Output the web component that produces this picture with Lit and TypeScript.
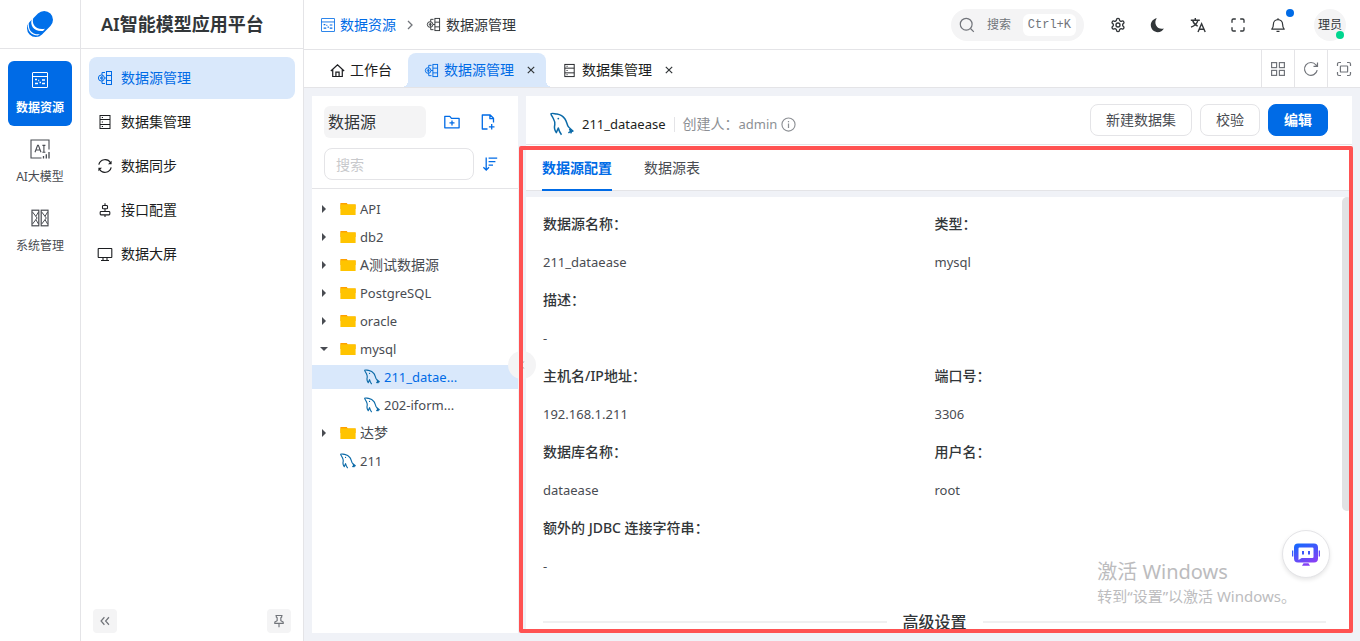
import { LitElement, html, css, svg, nothing, type TemplateResult } from "lit";
import { customElement, property, state } from "lit/decorators.js";
import { classMap } from "lit/directives/class-map.js";

/* ---------- icons ---------- */

const stroke = (size: number, box: number, width: number, body: TemplateResult) => html`<svg class="icon"
  width=${size} height=${size} viewBox="0 0 ${box} ${box}" fill="none" stroke="currentColor"
  stroke-width=${width} aria-hidden="true">${body}</svg>`;

const icons: Record<string, (size: number) => TemplateResult> = {
  resource: (s) => stroke(s, 16, 1, svg`<rect x=".5" y=".5" width="15" height="15" rx=".5"/><path d="M.5 4.5h15"/><path d="M3 7.5h2M6.2 8.5h1M3 11.5h3M7.5 10.5h1.5M10 8h3M10 11.5h3" stroke-width="1.3"/>`),
  source: (s) => stroke(s, 16, 1, svg`<rect x="9.500" y="1.500" width="5" height="13"/><path d="M9.500 5.500h5M9.500 10.500h5M8 2.500H5v2.500M8 13.500H5V11M5 6v4.500M7.500 8h2"/><circle cx="4.400" cy="8" r="3"/><circle cx="4.400" cy="8" r=".9"/>`),
  dataset: (s) => stroke(s, 16, 1, svg`<rect x="3" y="1.500" width="10" height="13"/><path d="M3 5.500h10M3 10.500h10M4.800 3.500h1.200M4.800 8h1.200M4.800 12.500h1.200"/>`),
  sync: (s) => stroke(s, 16, 1.2, svg`<path d="M1.800 6.600A6.500 6.500 0 0 1 13.600 4.700M14.200 9.400A6.500 6.500 0 0 1 2.400 11.300"/><path d="M14.600 2.800v3.400h-3.600zM1.400 13.200V9.800H5z" fill="currentColor" stroke="none"/>`),
  api: (s) => stroke(s, 16, 1.1, svg`<rect x="5.500" y="3.500" width="5" height="3.200" rx=".8"/><rect x="3.200" y="9.500" width="9.600" height="3.400" rx=".8"/><path d="M8 1.300v2.200M8 6.700v2.800M8 12.900v2"/>`),
  screen: (s) => stroke(s, 16, 1.1, svg`<rect x="1.200" y="2.500" width="13.600" height="9" rx=".4"/><path d="M6 11.500v3M10 11.500v3M4 14.500h8"/>`),
  model: (s) => stroke(s, 20, 1.1, svg`<path d="M19 10.500V1H1v18h10.500"/><path d="M13.500 19.500V17M16.300 19.500v-4.300M19 19.500v-6.500" stroke-width="1.300"/><path d="M5 13.300l2.600-7h.8l2.600 7M6 11h4M12.400 6.400h3M12.400 13.200h3M13.900 6.400v6.800"/>`),
  system: (s) => stroke(s, 18, 1.2, svg`<rect x="1" y="1.200" width="6.800" height="15.600"/><rect x="10.200" y="1.200" width="6.800" height="15.600"/><path d="M1.500 3l4.600 6-4.600 6M7.500 3L4.900 7.200M7.500 15l-2.600-4.200M10.700 3l4.600 6-4.600 6M16.600 3l-2.500 4.200M16.600 15l-2.500-4.200" stroke-width="1"/>`),
  home: (s) => stroke(s, 16, 1.3, svg`<path d="M.9 8.600L8 1.900l7.100 6.700M2.900 7.200v7.200h10.200V7.200M6.300 14.200V9.800h3.400v4.400"/>`),
  close: (s) => stroke(s, 10, 1.2, svg`<path d="M1.800 1.800l6.400 6.400M8.200 1.800L1.800 8.200"/>`),
  chevron: (s) => stroke(s, 12, 1.3, svg`<path d="M4 2l4 4-4 4"/>`),
  search: (s) => stroke(s, 16, 1.2, svg`<circle cx="7.200" cy="7.200" r="5.900"/><path d="M11.500 11.500l3.300 3.300"/>`),
  gear: (s) => stroke(s, 24, 2, svg`<path stroke-linejoin="round" d="M12.200 2h-.4a2 2 0 0 0-2 2v.2a2 2 0 0 1-1 1.700l-.5.3a2 2 0 0 1-2 0l-.1-.1a2 2 0 0 0-2.700.7l-.2.4a2 2 0 0 0 .7 2.700l.1.1a2 2 0 0 1 1 1.700v.5a2 2 0 0 1-1 1.800l-.1.1a2 2 0 0 0-.7 2.700l.2.4a2 2 0 0 0 2.700.7l.2-.1a2 2 0 0 1 2 0l.4.3a2 2 0 0 1 1 1.700v.2a2 2 0 0 0 2 2h.4a2 2 0 0 0 2-2v-.2a2 2 0 0 1 1-1.700l.5-.3a2 2 0 0 1 2 0l.1.1a2 2 0 0 0 2.700-.7l.2-.4a2 2 0 0 0-.7-2.700l-.1-.1a2 2 0 0 1-1-1.800v-.5a2 2 0 0 1 1-1.700l.1-.1a2 2 0 0 0 .7-2.700l-.2-.4a2 2 0 0 0-2.700-.7l-.2.1a2 2 0 0 1-2 0l-.4-.3a2 2 0 0 1-1-1.700V4a2 2 0 0 0-2-2z"/><circle cx="12" cy="12" r="3"/>`),
  moon: (s) => stroke(s, 16, 0, svg`<path fill="currentColor" d="M6.800 1.200C2.900 1.900.6 5 .8 8.600c.2 3.700 3.200 6.600 6.900 6.600 2.700 0 5-1.400 6.200-3.700-3.200.9-6.300-.2-7.700-2.900-1.300-2.400-1.100-5.200.6-7.400z"/>`),
  translate: (s) => stroke(s, 16, 1.4, svg`<path d="M.8 3.200h9M5.300 1v2.200M7.900 3.400C7 6.800 4.600 8.900 1 10.200M2.700 3.500c.8 2.800 2.400 4.500 5 5.600M8 15l3.600-8.200L15.200 15M9.200 12.200h4.800"/>`),
  expand: (s) => stroke(s, 24, 2, svg`<path stroke-linecap="round" stroke-linejoin="round" d="M8 3H5a2 2 0 0 0-2 2v3M21 8V5a2 2 0 0 0-2-2h-3M3 16v3a2 2 0 0 0 2 2h3M16 21h3a2 2 0 0 0 2-2v-3"/>`),
  bell: (s) => stroke(s, 16, 1.2, svg`<path d="M1.800 12.200h12.400c-1-1.100-1.600-2.200-1.600-5a4.600 4.600 0 0 0-9.200 0c0 2.800-.6 3.900-1.600 5z" stroke-linejoin="round"/><path d="M6.500 14.300h3M8 1.200v1.400"/>`),
  grid: (s) => stroke(s, 16, 1.2, svg`<rect x="1.600" y="1.600" width="5" height="5"/><rect x="9.400" y="1.600" width="5" height="5"/><rect x="1.600" y="9.400" width="5" height="5"/><rect x="9.400" y="9.400" width="5" height="5"/>`),
  refresh: (s) => stroke(s, 16, 1.2, svg`<path d="M14.200 9.200A6.400 6.400 0 1 1 13 4l1.400 1.300M14.500 1.400v4h-4"/>`),
  focus: (s) => stroke(s, 16, 1.2, svg`<path d="M1.500 5V3a1.500 1.500 0 0 1 1.500-1.500h2M11 1.500h2A1.500 1.500 0 0 1 14.500 3v2M14.500 11v2a1.500 1.500 0 0 1-1.500 1.500h-2M5 14.500H3A1.500 1.500 0 0 1 1.500 13v-2"/><rect x="4.400" y="5" width="7.200" height="6" rx=".6"/>`),
  folderAdd: (s) => stroke(s, 16, 1.3, svg`<path d="M.8 13.800V2.300h5l1.700 2h7.600v9.500H.8z" stroke-linejoin="round"/><path d="M8 6.400v5M5.500 8.900h5"/>`),
  fileAdd: (s) => stroke(s, 16, 1.3, svg`<path d="M7.500 15H2.300V1h7.900l3.300 3.300V8.500M9.900 1v3.700h3.600" stroke-linejoin="round"/><path d="M11.700 10v5.600M8.900 12.800h5.600"/>`),
  sort: (s) => stroke(s, 16, 1.3, svg`<path d="M4.200 1.500v12.500M1.400 11.200l2.800 2.900L7 11.200M6.600 2.200h8.600M6.600 5.700h6.800M6.600 9.200h4.400"/>`),
  info: (s) => stroke(s, 16, 1.2, svg`<circle cx="8" cy="8" r="7"/><path d="M8 7v4.800M8 4.200v1.500" stroke-width="1.300"/>`),
  collapse: (s) => stroke(s, 14, 1.4, svg`<path d="M6.300 2.600L2.400 7l3.900 4.400M11.600 2.600L7.700 7l3.900 4.400"/>`),
  pin: (s) => stroke(s, 16, 1.3, svg`<path d="M4 1.700h8M4.900 1.700v1.700l1 1v3.200L3.200 9.300v1.400h9.600V9.300l-2.700-1.700V4.400l1-1V1.700M8 10.700v4.500"/>`),
  left: (s) => stroke(s, 12, 1.2, svg`<path d="M8 2L4 6l4 4"/>`),
  dolphin: (s) => html`<svg class="icon" width=${s} height=${s} viewBox="0 0 24 24" fill="none" stroke="#0b6aa8" stroke-width=${s > 20 ? 1.5 : 1.7} stroke-linejoin="round" aria-hidden="true"><path d="M11.500 22.800C10 20.800 9 18.800 8.300 16L6.300 20.600C4.300 18 4.100 15.500 4.800 12.500c.5-3-1-5-2-7C2 4 .9 2.800 1 1.800 1.800.8 4.200 1.700 7 2c4 .6 6.500 2.800 8 5 1.600 2.400 2 5.200 3 7.200 1 1.800 3.200 3 4.900 4.900-1.500.4-3.100.6-4.500 1.700M19.500 16.800l1.900 4.600"/><circle cx="8.300" cy="6.600" r=".9" fill="#0b6aa8" stroke="none"/></svg>`,
  folder: (s) => html`<svg class="icon" width=${s} height=${s} viewBox="0 0 16 16" aria-hidden="true"><path fill="#ffa000" d="M.4 2h6.400l1 1.400h7.800V8H.4z"/><path fill="#ffc400" d="M.4 3.400h15.200V14H.4z"/></svg>`,
  logo: (s) => html`<svg class="icon" width=${s} height=${s} viewBox="0 0 28 28" aria-hidden="true"><path d="M9.800 18.200l8.400-8.400" stroke="#0070ea" stroke-width="17.600" stroke-linecap="round"/><path fill="#fff" d="M7.400 7.200C5.300 13.500 9 20.500 19 18.800l-2 2.200C8 22 3.300 15.300 6 8.800z"/><path fill="#fff" d="M3 12.700C2 19.200 5.500 25 14 24.300l-2.300 1.200C5 25.500.8 20 2.200 14z"/></svg>`,
  bot: (s) => html`<svg class="icon" width=${s} height=${s} viewBox="0 0 28 28" aria-hidden="true"><defs><linearGradient id="botfill" x1="0" y1="0" x2=".5" y2="1"><stop offset="0" stop-color="#0a6cff"/><stop offset="1" stop-color="#8a3ff5"/></linearGradient></defs><path fill="url(#botfill)" fill-rule="evenodd" d="M6 3.500h16a4 4 0 0 1 4 4v11a4 4 0 0 1-4 4H6a4 4 0 0 1-4-4v-11a4 4 0 0 1 4-4zm1.500 4a1 1 0 0 0-1 1v11.500l3.200-2h10.800a1 1 0 0 0 1-1V8.500a1 1 0 0 0-1-1zM0 10.500h1.300v6H0zM26.700 10.500H28v6h-1.300zM11.500 23.200h5l1.500 2.500h-8z"/><path fill="#3b57fa" d="M10 11h2v3.500h-2zM16 11h2v3.500h-2z"/></svg>`,
};

const reset = css`
  * { box-sizing: border-box; }
  button, input { font: inherit; color: inherit; margin: 0; padding: 0; border: 0; background: none; outline: 0; }
  button { cursor: pointer; }
  a { color: inherit; text-decoration: none; }
  ul, dl, dd, h1, h2 { margin: 0; padding: 0; list-style: none; font-weight: 400; }
  .icon { display: block; flex: none; }
  .latin { font-size: 13px; }
`;

const isLatin = (text: string) => /^[\x20-\x7e]+$/.test(text);

/* ---------- left rails ---------- */

@customElement("module-rail")
class ModuleRail extends LitElement {
  static styles = [reset, css`
    :host { display: flex; flex-direction: column; width: 81px; flex: none; background: #fff; border-right: 1px solid #e4e4e7; }
    .logo { display: flex; align-items: center; justify-content: center; height: 49px; border-bottom: 1px solid #e4e4e7; }
    nav { display: flex; flex-direction: column; gap: 4px; padding: 12px 8px; }
    .item { display: flex; flex-direction: column; align-items: center; gap: 9px; height: 65px; padding-top: 9px; border-radius: 6px; font-size: 12px; line-height: 18px; color: #494c52; }
    .active { background: #006be6; color: #fff; font-weight: 700; }
    .glyph { display: flex; align-items: center; height: 20px; }
  `];
  render() {
    const items = [["resource", "数据资源", 16], ["model", "AI大模型", 20], ["system", "系统管理", 18]] as const;
    return html`<div class="logo">${icons.logo(28)}</div>
      <nav>${items.map(([icon, label, size], i) => html`<a href="#" class=${classMap({ item: true, active: i === 0 })}>
        <span class="glyph">${icons[icon](size)}</span><span>${label}</span></a>`)}</nav>`;
  }
}

@customElement("side-menu")
class SideMenu extends LitElement {
  static styles = [reset, css`
    :host { display: flex; flex-direction: column; width: 223px; flex: none; background: #fff; border-right: 1px solid #e4e4e7; }
    h1 { height: 49px; line-height: 48px; padding-left: 20px; border-bottom: 1px solid #e4e4e7; font-size: 18px; font-weight: 600; color: #323639; white-space: nowrap; }
    nav { display: flex; flex-direction: column; gap: 2px; padding: 8px; flex: 1; }
    .item { display: flex; align-items: center; gap: 8px; height: 42px; padding-left: 8px; border-radius: 8px; font-size: 14px; color: #1c1e21; }
    .active { background: #d9e8fb; color: #006be6; }
    .foot { display: flex; justify-content: space-between; padding: 8px 12px; }
    .foot button { display: flex; align-items: center; justify-content: center; width: 24px; height: 24px; border-radius: 4px; background: #f4f4f5; color: #71747a; }
  `];
  render() {
    const items = [["source", "数据源管理"], ["dataset", "数据集管理"], ["sync", "数据同步"], ["api", "接口配置"], ["screen", "数据大屏"]];
    return html`<h1>AI智能模型应用平台</h1>
      <nav>${items.map(([icon, label], i) => html`<a href="#" class=${classMap({ item: true, active: i === 0 })}>${icons[icon](16)}<span>${label}</span></a>`)}</nav>
      <div class="foot"><button aria-label="收起">${icons.collapse(12)}</button><button aria-label="固定">${icons.pin(14)}</button></div>`;
  }
}

/* ---------- header and page tabs ---------- */

@customElement("top-bar")
class TopBar extends LitElement {
  static styles = [reset, css`
    :host { display: flex; align-items: center; justify-content: space-between; height: 50px; padding: 0 14px 0 17px; flex: none; background: #fff; border-bottom: 1px solid #e4e4e7; color: #323639; font-size: 14px; }
    .crumbs { display: flex; align-items: center; gap: 8px; }
    .crumb { display: flex; align-items: center; gap: 5px; }
    .link { color: #006be6; }
    .next { color: #71747a; padding-right: 2px; }
    .tools { display: flex; align-items: center; }
    .search { display: flex; align-items: center; height: 32px; width: 133px; padding: 0 8px; margin-right: 18px; border-radius: 16px; background: #f4f4f5; color: #71747a; font-size: 12px; }
    .search span { padding-left: 12px; flex: 1; text-align: left; }
    kbd { font: 12px/22px "Liberation Mono", "DejaVu Sans Mono", monospace; background: #fff; border-radius: 6px; padding: 0 5px; }
    .tool { position: relative; display: flex; align-items: center; justify-content: center; width: 32px; height: 32px; margin-right: 8px; }
    .dot { position: absolute; right: 0; top: 0; width: 8px; height: 8px; border-radius: 50%; background: #006be6; }
    .avatar { position: relative; width: 32px; height: 32px; margin-left: 12px; border-radius: 50%; background: #f4f4f5; font-size: 12px; line-height: 32px; text-align: center; white-space: nowrap; }
    .online { position: absolute; right: 2px; bottom: 2px; width: 8px; height: 8px; border-radius: 50%; background: #00d68f; }
  `];
  render() {
    return html`<nav class="crumbs">
        <a href="#" class="crumb link">${icons.resource(14)}<span>数据资源</span></a>
        <span class="next">${icons.chevron(12)}</span>
        <span class="crumb">${icons.source(15)}<span>数据源管理</span></span>
      </nav>
      <div class="tools">
        <button class="search">${icons.search(16)}<span>搜索</span><kbd>Ctrl+K</kbd></button>
        <button class="tool" aria-label="设置">${icons.gear(16)}</button>
        <button class="tool" aria-label="主题">${icons.moon(16)}</button>
        <button class="tool" aria-label="语言">${icons.translate(16)}</button>
        <button class="tool" aria-label="全屏">${icons.expand(16)}</button>
        <button class="tool" aria-label="通知">${icons.bell(16)}<i class="dot"></i></button>
        <button class="avatar">理员<i class="online"></i></button>
      </div>`;
  }
}

@customElement("page-tabs")
class PageTabs extends LitElement {
  static styles = [reset, css`
    :host { display: flex; align-items: stretch; justify-content: space-between; height: 38px; flex: none; background: #fff; border-bottom: 1px solid #e4e4e7; color: #1c1e21; font-size: 14px; }
    .tabs { display: flex; padding-left: 12px; align-items: flex-end; }
    .tab { position: relative; display: flex; align-items: center; gap: 5px; height: 34px; padding: 0 6px 0 16px; border-radius: 8px 8px 0 0; white-space: nowrap; }
    .home { padding: 0 16px 0 14px; }
    .active { background: #d9e8fb; color: #006be6; }
    .active::before, .active::after { content: ""; position: absolute; bottom: 0; width: 6px; height: 6px; }
    .active::before { left: -6px; background: radial-gradient(circle at 0 0, transparent 6px, #d9e8fb 6px); }
    .active::after { right: -6px; background: radial-gradient(circle at 100% 0, transparent 6px, #d9e8fb 6px); }
    .close { display: flex; color: #323639; padding: 4px; margin-left: 3px; }
    .actions { display: flex; color: #71747a; }
    .actions button { display: flex; align-items: center; justify-content: center; width: 33px; border-left: 1px solid #e4e4e7; }
  `];
  render() {
    const close = html`<button class="close" aria-label="关闭">${icons.close(10)}</button>`;
    return html`<div class="tabs">
        <a href="#" class="tab home">${icons.home(15)}<span>工作台</span></a>
        <div class="tab active">${icons.source(15)}<span>数据源管理</span>${close}</div>
        <div class="tab">${icons.dataset(15)}<span>数据集管理</span>${close}</div>
      </div>
      <div class="actions"><button aria-label="布局">${icons.grid(16)}</button><button aria-label="刷新">${icons.refresh(16)}</button><button aria-label="最大化">${icons.focus(16)}</button></div>`;
  }
}

/* ---------- data source tree ---------- */

interface Node { label: string; kind: "folder" | "dolphin"; level: number; open?: boolean; selected?: boolean; }

@customElement("source-tree")
class SourceTree extends LitElement {
  static styles = [reset, css`
    :host { position: relative; z-index: 1; display: flex; flex-direction: column; width: 206px; flex: none; background: #fff; color: #494c52; font-size: 14px; }
    .head { display: grid; grid-template-columns: auto 1fr; gap: 10px 12px; padding: 10px 12px 8px; border-bottom: 1px solid #e4e4e7; color: #006be6; }
    .title { width: 102px; height: 32px; padding-left: 4px; line-height: 32px; border-radius: 6px; background: #f4f4f5; color: #323639; font-size: 16px; }
    .row { grid-column: 1 / -1; display: flex; align-items: center; }
    .adds { display: flex; align-items: center; gap: 20px; padding-left: 6px; }
    .adds button, .sort { display: flex; }
    input { width: 150px; height: 32px; padding: 0 11px; border: 1px solid #e4e4e7; border-radius: 8px; color: #323639; }
    input::placeholder { color: #c8c9cc; opacity: 1; }
    .sort { padding-left: 8px; }
    ul { display: flex; flex-direction: column; gap: 4px; padding-top: 8px; }
    li { display: flex; align-items: center; height: 24px; padding-left: 4px; }
    .nested { padding-left: 28px; }
    .selected { background: #d9e8fb; color: #006be6; }
    .caret { display: flex; width: 24px; padding-left: 4px; flex: none; }
    .label { padding-left: 4px; white-space: nowrap; }
    .handle { position: absolute; right: -18px; top: 255px; display: flex; align-items: center; justify-content: center; width: 28px; height: 28px; border-radius: 50%; background: #f4f4f5; color: #71747a; }
  `];
  @state() nodes: Node[] = [
    { label: "API", kind: "folder", level: 0 },
    { label: "db2", kind: "folder", level: 0 },
    { label: "A测试数据源", kind: "folder", level: 0 },
    { label: "PostgreSQL", kind: "folder", level: 0 },
    { label: "oracle", kind: "folder", level: 0 },
    { label: "mysql", kind: "folder", level: 0, open: true },
    { label: "211_datae...", kind: "dolphin", level: 1, selected: true },
    { label: "202-iform...", kind: "dolphin", level: 1 },
    { label: "达梦", kind: "folder", level: 0 },
    { label: "211", kind: "dolphin", level: 0 },
  ];
  private caret(n: Node) {
    if (n.kind !== "folder") return nothing;
    return html`<svg width="8" height="8" viewBox="0 0 8 8" aria-hidden="true"><path fill="#494c52" d=${n.open ? "M0 2h8L4 6z" : "M2 0v8l4-4z"}/></svg>`;
  }
  render() {
    return html`<div class="head">
        <div class="title">数据源</div>
        <div class="adds"><button aria-label="新建文件夹">${icons.folderAdd(16)}</button><button aria-label="新建数据源">${icons.fileAdd(16)}</button></div>
        <div class="row"><input type="text" placeholder="搜索" aria-label="搜索"><button class="sort" aria-label="排序">${icons.sort(16)}</button></div>
      </div>
      <ul>${this.nodes.map((n) => html`<li class=${classMap({ nested: n.level > 0, selected: !!n.selected })}>
        <span class="caret">${this.caret(n)}</span>${icons[n.kind](16)}<span class=${classMap({ label: true, latin: isLatin(n.label) })}>${n.label}</span></li>`)}</ul>
      <button class="handle" aria-label="收起面板">${icons.left(10)}</button>`;
  }
}

/* ---------- details ---------- */

@customElement("source-detail")
class SourceDetail extends LitElement {
  static styles = [reset, css`
    :host { position: relative; display: flex; flex-direction: column; flex: 1; min-width: 0; color: #494c52; font-size: 14px; line-height: 22px; }
    .head { display: flex; align-items: center; justify-content: space-between; height: 49px; padding: 0 24px; background: #fff; border-bottom: 1px solid #e4e4e7; }
    .who { display: flex; align-items: center; padding-top: 8px; color: #8c8f94; }
    .name { padding: 0 8px; color: #1c1e21; }
    .by { display: flex; align-items: center; gap: 4px; padding-left: 8px; border-left: 1px solid #e4e4e7; line-height: 13px; }
    .creator { display: flex; align-items: baseline; }
    .buttons { display: flex; gap: 8px; }
    .buttons button { height: 32px; padding: 0 15px; border: 1px solid #e4e4e7; border-radius: 8px; background: #fff; }
    .buttons .primary { background: #006be6; border-color: #006be6; color: #fff; font-weight: 600; }
    .tabs { display: flex; gap: 32px; height: 46px; padding: 0 16px; background: #fff; border-bottom: 1px solid #e4e4e7; }
    .tabs button { height: 46px; padding-top: 2px; border-bottom: 2px solid transparent; }
    .tabs .on { color: #006be6; border-color: #006be6; font-weight: 600; }
    .body { position: relative; flex: 1; min-height: 0; margin-top: 6px; overflow: hidden; background: #fff; padding: 16px 26px 0 17px; }
    dl { display: grid; grid-template-columns: 1fr 1fr; }
    .field { display: flex; flex-direction: column; gap: 16px; height: 76px; }
    .wide { grid-column: 1 / -1; }
    dt { color: #323639; font-weight: 500; }
    .divider { display: flex; align-items: center; gap: 16px; margin-top: 17px; font-size: 16px; line-height: 24px; font-weight: 500; color: #323639; }
    .divider::before, .divider::after { content: ""; flex: 1; height: 2px; background: #f0f0f1; }
    .thumb { position: absolute; right: 0; top: 0; width: 10px; height: 314px; border-radius: 5px; background: #e1e2e4; }
    .frame { position: absolute; z-index: 2; inset: 50px -1px 0 -7px; border: 4px solid #ff5252; border-radius: 2px; pointer-events: none; }
  `];
  @property({ type: Array }) fields: [string, string, boolean?][] = [
    ["数据源名称", "211_dataease"], ["类型", "mysql"], ["描述", "-", true],
    ["主机名/IP地址", "192.168.1.211"], ["端口号", "3306"],
    ["数据库名称", "dataease"], ["用户名", "root"], ["额外的 JDBC 连接字符串", "-", true],
  ];
  render() {
    return html`<div class="head">
        <div class="who">${icons.dolphin(24)}<span class="name latin">211_dataease</span><span class="by"><span class="creator">创建人：<span class="latin">admin</span></span>${icons.info(15)}</span></div>
        <div class="buttons"><button>新建数据集</button><button>校验</button><button class="primary">编辑</button></div>
      </div>
      <div class="tabs"><button class="on">数据源配置</button><button>数据源表</button></div>
      <div class="body">
        <dl>${this.fields.map(([k, v, wide]) => html`<div class=${classMap({ field: true, wide: !!wide })}><dt>${k}：</dt><dd class="latin">${v}</dd></div>`)}</dl>
        <h2 class="divider">高级设置</h2>
        <div class="thumb"></div>
      </div>
      <div class="frame"></div>`;
  }
}

@customElement("app-root")
class AppRoot extends LitElement {
  static styles = [reset, css`
    :host { display: flex; height: 100vh; overflow: hidden; position: relative; background: #f0f2f7; font-family: "Noto Sans", "Noto Sans CJK SC", sans-serif; line-height: 22px; }
    .main { display: flex; flex-direction: column; flex: 1; min-width: 0; }
    .work { display: flex; gap: 8px; flex: 1; min-height: 0; padding: 8px; }
    .notice { position: absolute; z-index: 3; right: 64px; bottom: 35px; color: #bcbcbe; font-size: 15px; line-height: 20px; pointer-events: none; white-space: nowrap; }
    .notice strong { display: block; font-size: 20px; line-height: 28px; font-weight: 400; }
    .assistant { position: absolute; z-index: 3; right: 30px; bottom: 63px; display: flex; align-items: center; justify-content: center; width: 48px; height: 48px; border-radius: 50%; background: #fff; border: 1px solid #e4e4e7; box-shadow: 0 2px 4px rgba(0, 0, 0, .1); }
  `];
  render() {
    return html`<module-rail></module-rail><side-menu></side-menu>
      <div class="main"><top-bar></top-bar><page-tabs></page-tabs>
        <div class="work"><source-tree></source-tree><source-detail></source-detail></div></div>
      <div class="notice"><strong>激活 Windows</strong>转到“设置”以激活 Windows。</div>
      <button class="assistant" aria-label="智能助手">${icons.bot(28)}</button>`;
  }
}
